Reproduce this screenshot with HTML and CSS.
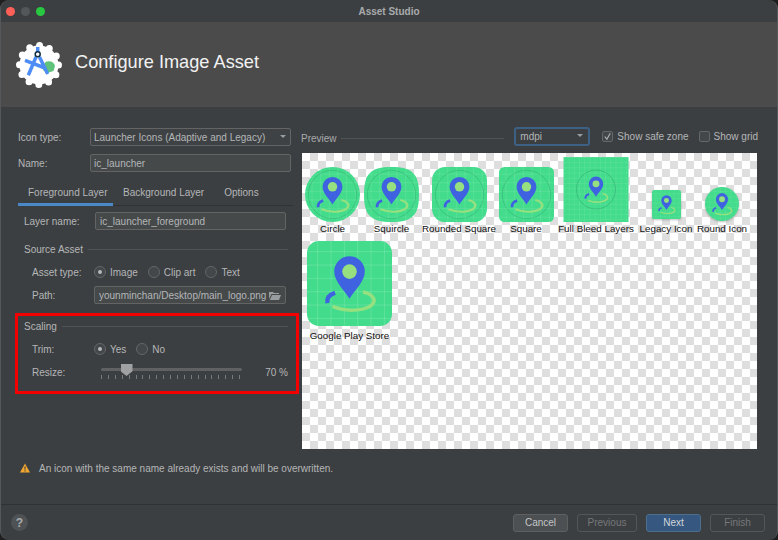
FILE: index.html
```html
<!DOCTYPE html>
<html lang="en">
<head>
  <meta charset="UTF-8">
  <meta name="viewport" content="width=device-width, initial-scale=1">
  <title>Asset Studio</title>
  <link rel="stylesheet" href="styles.css">
</head>
<body>

<svg class="defs" aria-hidden="true">
  <defs>
    <pattern id="grid" width="15.7" height="15.7" patternUnits="userSpaceOnUse" x="12" y="12">
      <path d="M0 0V15.7M0 0H15.7" stroke="#fff" stroke-opacity=".3" stroke-width="1.1" fill="none"/>
    </pattern>
    <pattern id="gridFine" width="8" height="8" patternUnits="userSpaceOnUse">
      <path d="M0 0V8M0 0H8" stroke="#fff" stroke-opacity=".22" stroke-width=".9" fill="none"/>
    </pattern>
    <symbol id="art" viewBox="0 0 100 100">
      <path d="M66 60C76 62 81 68 78 73C73 81 50 85 30 77" fill="none" stroke="#97e07f" stroke-width="4"/>
      <path d="M33 61C27 63 23 67 24 73" fill="none" stroke="#3f63e0" stroke-width="5"/>
      <path d="M50 68C44 58 32 48 32 36A18 18 0 0 1 68 36C68 48 56 58 50 68Z" fill="#3f63e0"/>
      <circle cx="50" cy="36" r="8.6" fill="#97e07f"/>
    </symbol>
  </defs>
</svg>

<div class="window">
  <div class="titlebar">
    <span class="light red"></span>
    <span class="light grey"></span>
    <span class="light green"></span>
    <span class="window-title">Asset Studio</span>
  </div>

  <div class="header">
    <svg class="logo" viewBox="0 0 46 46">
      <circle cx="23" cy="23" r="19.5" fill="#fff" stroke="#fff" stroke-width="7" stroke-linecap="round" stroke-dasharray="0 10.21"/>
      <path d="M27 28V24A6.2 6.500 0 0 1 39 24L37.500 29L31 31Z" fill="#5fc37c"/>
      <path d="M21.700 5V10M20 15L12.300 33.300M23.500 15L31.700 32M9 18.300L29 26" fill="none" stroke="#4e8df5" stroke-width="3.500"/>
      <circle cx="21.700" cy="12.300" r="2.500" fill="#fff" stroke="#12303f" stroke-width="1.500"/>
    </svg>
    <h1>Configure Image Asset</h1>
  </div>

  <div class="main">
    <div class="form">
      <div class="row">
        <label class="label-top">Icon type:</label>
        <div class="select wide">Launcher Icons (Adaptive and Legacy)<span class="arrow"></span></div>
      </div>
      <div class="row name-row">
        <label class="label-top">Name:</label>
        <div class="field wide">ic_launcher</div>
      </div>

      <div class="tabs">
        <span class="tab active">Foreground Layer</span>
        <span class="tab">Background Layer</span>
        <span class="tab">Options</span>
      </div>

      <div class="pane">
        <div class="row layer-row">
          <label class="label-layer">Layer name:</label>
          <div class="field grow">ic_launcher_foreground</div>
        </div>

        <div class="legend source"><span>Source Asset</span></div>
        <div class="row type-row">
          <label class="label-sub">Asset type:</label>
          <span class="radio on"></span><span class="opt">Image</span>
          <span class="radio"></span><span class="opt">Clip art</span>
          <span class="radio"></span><span class="opt">Text</span>
        </div>
        <div class="row path-row">
          <label class="label-sub">Path:</label>
          <div class="field grow path">
            younminchan/Desktop/main_logo.png
            <svg class="folder" viewBox="0 0 12 9"><path d="M0 1H4L5 2H10V3H2.500L0 8ZM3 4H12L10 9H.8Z" fill="#9a9d9f"/></svg>
          </div>
        </div>
      </div>

      <div class="scaling">
        <div class="legend"><span>Scaling</span></div>
        <div class="row trim-row">
          <label class="label-sub">Trim:</label>
          <span class="radio on"></span><span class="opt">Yes</span>
          <span class="radio"></span><span class="opt">No</span>
        </div>
        <div class="row resize-row">
          <label class="label-sub">Resize:</label>
          <div class="slider">
            <div class="track"></div>
            <div class="ticks"></div>
            <span class="thumb"></span>
          </div>
          <span class="percent">70 %</span>
        </div>
      </div>
    </div>

    <div class="preview">
      <div class="preview-head">
        <span class="preview-title">Preview</span>
        <span class="preview-line"></span>
        <div class="select density">mdpi<span class="arrow"></span></div>
        <span class="check on">
          <svg viewBox="0 0 10 10"><path d="M2 5L4.300 8L8 1.500" fill="none" stroke="#b5b5b5" stroke-width="1.200"/></svg>
        </span>
        <span class="check-text">Show safe zone</span>
        <span class="check"></span>
        <span class="check-text">Show grid</span>
      </div>

      <div class="canvas">
        <div class="icon-row">
          <div class="cell c-circle">
            <svg class="icon" viewBox="0 0 100 100">
              <circle cx="50" cy="50" r="50" fill="#43dc8c"/>
              <circle cx="50" cy="50" r="50" fill="url(#grid)"/>
              <circle class="safe" cx="50" cy="50" r="44"/>
              <use href="#art" width="100" height="100"/>
            </svg>
            <span>Circle</span>
          </div>
          <div class="cell c-squircle">
            <svg class="icon" viewBox="0 0 100 100">
              <path d="M50 0C88 0 100 12 100 50S88 100 50 100S0 88 0 50S12 0 50 0Z" fill="#43dc8c"/>
              <path d="M50 0C88 0 100 12 100 50S88 100 50 100S0 88 0 50S12 0 50 0Z" fill="url(#grid)"/>
              <circle class="safe" cx="50" cy="50" r="44"/>
              <use href="#art" width="100" height="100"/>
            </svg>
            <span>Squircle</span>
          </div>
          <div class="cell c-rounded">
            <svg class="icon" viewBox="0 0 100 100">
              <rect width="100" height="100" rx="24" fill="#43dc8c"/>
              <rect width="100" height="100" rx="24" fill="url(#grid)"/>
              <circle class="safe" cx="50" cy="50" r="44"/>
              <use href="#art" width="100" height="100"/>
            </svg>
            <span>Rounded Square</span>
          </div>
          <div class="cell c-square">
            <svg class="icon" viewBox="0 0 100 100">
              <rect width="100" height="100" rx="10" fill="#43dc8c"/>
              <rect width="100" height="100" rx="10" fill="url(#grid)"/>
              <circle class="safe" cx="50" cy="50" r="44"/>
              <use href="#art" width="100" height="100"/>
            </svg>
            <span>Square</span>
          </div>
          <div class="cell c-bleed">
            <svg class="icon" viewBox="0 0 100 100">
              <rect width="100" height="100" fill="#43dc8c"/>
              <rect width="100" height="100" fill="url(#gridFine)"/>
              <circle class="safe" cx="50" cy="50" r="30"/>
              <use href="#art" x="19" y="19" width="62" height="62"/>
            </svg>
            <span>Full Bleed Layers</span>
          </div>
          <div class="cell c-legacy">
            <svg class="icon" viewBox="0 0 100 100">
              <rect width="100" height="100" rx="8" fill="#43dc8c"/>
              <rect width="100" height="100" rx="8" fill="url(#grid)"/>
              <use href="#art" width="100" height="100"/>
            </svg>
            <span>Legacy Icon</span>
          </div>
          <div class="cell c-round">
            <svg class="icon" viewBox="0 0 100 100">
              <circle cx="50" cy="50" r="50" fill="#43dc8c"/>
              <circle cx="50" cy="50" r="50" fill="url(#grid)"/>
              <use href="#art" width="100" height="100"/>
            </svg>
            <span>Round Icon</span>
          </div>
        </div>
        <div class="icon-row second">
          <div class="cell c-play">
            <svg class="icon" viewBox="0 0 100 100">
              <rect width="100" height="100" rx="14" fill="#43dc8c"/>
              <rect width="100" height="100" rx="14" fill="url(#grid)"/>
              <use href="#art" width="100" height="100"/>
            </svg>
            <span>Google Play Store</span>
          </div>
        </div>
      </div>
    </div>
  </div>

  <div class="warning">
    <svg class="warn-icon" viewBox="0 0 10 10">
      <path d="M5 .5L10 9.500H0Z" fill="#f0a732"/>
      <path d="M5 3.500V6.500M5 7.300V8.500" stroke="#3c3f41" stroke-width="1.100"/>
    </svg>
    An icon with the same name already exists and will be overwritten.
  </div>

  <div class="footer">
    <span class="help">?</span>
    <span class="btn cancel">Cancel</span>
    <span class="btn disabled wider">Previous</span>
    <span class="btn primary">Next</span>
    <span class="btn disabled">Finish</span>
  </div>
</div>

</body>
</html>
```

FILE: styles.css
```css
html, body {
  margin: 0;
  padding: 0;
  background: #1f1f1f;
}
body {
  font-family: "Liberation Sans", Arial, sans-serif;
  font-size: 10px;
  color: #b4b6b8;
}
.defs {
  position: absolute;
  width: 0;
  height: 0;
}
.window {
  width: 778px;
  height: 540px;
  box-sizing: border-box;
  border-left: 1px solid #55585a;
  border-right: 1px solid #55585a;
  border-radius: 9px;
  background: #3c3f41;
  display: flex;
  flex-direction: column;
  overflow: hidden;
}

/* title bar */
.titlebar {
  height: 22px;
  flex: none;
  display: flex;
  align-items: center;
  gap: 6px;
  padding-left: 5px;
  position: relative;
}
.light {
  width: 9px;
  height: 9px;
  border-radius: 50%;
}
.red { background: #fe5f57; }
.grey { background: #54575a; }
.green { background: #28c840; }
.window-title {
  position: absolute;
  left: 0;
  right: 0;
  text-align: center;
  font-size: 10px;
  font-weight: bold;
  color: #a9abad;
}

/* header */
.header {
  height: 85px;
  flex: none;
  background: #4b4b4b;
  display: flex;
  align-items: center;
  padding-left: 15px;
}
.logo {
  width: 46px;
  height: 46px;
}
h1 {
  margin: 0 0 4px 13px;
  font-size: 18.200px;
  font-weight: normal;
  color: #f2f2f2;
}

/* layout */
.main {
  display: flex;
  padding: 21px 0 0 17px;
}
.form {
  width: 283px;
  flex: none;
}
.row {
  display: flex;
  align-items: center;
}
.name-row { margin-top: 8px; }
.label-top { width: 72px; }
.label-layer { width: 71px; }
.label-sub { width: 62px; padding-left: 8px; }

/* inputs */
.field, .select {
  height: 18px;
  box-sizing: border-box;
  background: #45494a;
  border: 1px solid #646464;
  border-radius: 2px;
  padding: 0 4px;
  display: flex;
  align-items: center;
  white-space: nowrap;
  position: relative;
}
.wide { width: 201px; padding: 0 3px; }
.grow { flex: 1; }
.select { background: #3f4244; }
.arrow {
  position: absolute;
  right: 4px;
  top: 6px;
  border-left: 3.500px solid transparent;
  border-right: 3.500px solid transparent;
  border-top: 3.500px solid #9a9d9f;
}
.path { justify-content: space-between; }
.folder { width: 12px; height: 9px; flex: none; }

/* tabs */
.tabs {
  display: flex;
  margin: 8px 8px 0 0;
  height: 26px;
  box-sizing: border-box;
  border-bottom: 1px solid #323232;
}
.tab {
  padding: 7px 10px 0;
  box-sizing: border-box;
  height: 25px;
  white-space: nowrap;
}
.tab.active {
  width: 95px;
  border-bottom: 3px solid #4a88c7;
  height: 26px;
}

/* foreground pane */
.pane { padding: 6px 13px 0 6px; }
.layer-row { margin-right: 2px; }
.legend {
  display: flex;
  align-items: center;
  gap: 5px;
  height: 14px;
}
.legend::after {
  content: "";
  flex: 1;
  height: 1px;
  background: #515355;
}
.source { margin-top: 12px; }
.type-row { margin-top: 9px; height: 14px; }
.path-row { margin: 7px 2px 0 0; }
.radio {
  width: 12px;
  height: 12px;
  box-sizing: border-box;
  border: 1px solid #646668;
  border-radius: 50%;
  background: #43474a;
  flex: none;
  margin-right: 4px;
  display: flex;
  align-items: center;
  justify-content: center;
}
.radio.on::after {
  content: "";
  width: 4px;
  height: 4px;
  border-radius: 50%;
  background: #b8b8b8;
}
.opt { margin-right: 10px; }

/* red annotated section */
.scaling {
  width: 284px;
  height: 81px;
  box-sizing: border-box;
  margin: 9px 0 0 -3px;
  border: 3px solid #f40000;
  padding: 3px 8px 0 6px;
}
.trim-row { margin-top: 9px; height: 14px; }
.resize-row { margin-top: 9px; height: 14px; }
.slider {
  width: 141px;
  height: 16px;
  margin-left: 7px;
  position: relative;
}
.track {
  height: 3px;
  margin-top: 4px;
  background: #5f6163;
  border-radius: 2px;
}
.ticks {
  height: 4px;
  margin-top: 4px;
  background: repeating-linear-gradient(90deg, #787a7c 0 1px, transparent 1px 6.900px);
}
.thumb {
  position: absolute;
  left: 19.500px;
  top: 0;
  width: 12px;
  height: 12px;
  background: #9fa1a3;
  clip-path: polygon(0 0, 100% 0, 100% 60%, 50% 100%, 0 60%);
}
.percent { margin-left: auto; }

/* preview */
.preview {
  width: 457px;
  flex: none;
  margin-top: -1px;
}
.preview-head {
  height: 19px;
  display: flex;
  align-items: center;
  padding-bottom: 7px;
}
.preview-title { color: #a8aaac; margin-top: 3px; }
.preview-line {
  flex: 1;
  height: 1px;
  background: #515355;
  margin: 3px 10px 0 4px;
}
.density {
  width: 76px;
  height: 19px;
  border: 2px solid #3d6185;
  border-radius: 3px;
  margin-right: 12px;
  background: #3c3f41;
}
.density .arrow { top: 5px; right: 5px; }
.check {
  width: 11px;
  height: 11px;
  box-sizing: border-box;
  border: 1px solid #646668;
  border-radius: 2px;
  background: #43474a;
  margin-right: 4px;
  display: flex;
}
.check svg { width: 100%; height: 100%; }
.check-text { margin-right: 10px; white-space: nowrap; }
.check-text:last-child { margin-right: 0; }
.canvas {
  width: 455px;
  height: 296px;
  margin-left: 1px;
  box-sizing: border-box;
  padding: 4px 0 0 2px;
  background: conic-gradient(#dedede 25%, #fff 0 50%, #dedede 0 75%, #fff 0) 0 0 / 16px 16px;
}
.icon-row {
  display: flex;
  align-items: flex-end;
}
.second { margin-top: 5px; }
.cell {
  display: flex;
  flex-direction: column;
  align-items: center;
  color: #111;
  font-size: 9.800px;
  line-height: 14px;
  white-space: nowrap;
}
.icon { display: block; }
.safe {
  fill: none;
  stroke: #1f7a55;
  stroke-opacity: .55;
  stroke-width: .8;
}
.c-circle { width: 57px; }
.c-squircle { width: 61px; }
.c-rounded { width: 74px; }
.c-square { width: 60px; }
.c-bleed { width: 80px; }
.c-legacy { width: 60px; }
.c-round { width: 52px; }
.c-circle .icon, .c-squircle .icon, .c-rounded .icon, .c-square .icon { width: 55px; height: 55px; }
.c-bleed .icon { width: 66px; height: 65px; }
.c-legacy .icon { width: 29px; height: 29px; margin-bottom: 3px; filter: drop-shadow(0 1px 1px rgba(0,0,0,.25)); }
.c-round .icon { width: 34px; height: 34px; margin-bottom: 1px; filter: drop-shadow(0 1px 1px rgba(0,0,0,.25)); }
.c-play { width: 91px; }
.c-play .icon { width: 85px; height: 85px; margin-bottom: 3px; }

/* warning */
.warning {
  display: flex;
  align-items: center;
  gap: 9px;
  height: 16px;
  margin: 11px 0 0 19px;
}
.warn-icon { width: 10px; height: 10px; }

/* footer */
.footer {
  margin-top: auto;
  height: 36px;
  box-sizing: border-box;
  border-top: 1px solid #2f3133;
  display: flex;
  align-items: center;
  gap: 9px;
  padding: 0 12px 0 10px;
}
.help {
  width: 17px;
  height: 17px;
  border-radius: 50%;
  background: #4e5254;
  color: #a9abad;
  font-size: 12px;
  font-weight: bold;
  display: flex;
  align-items: center;
  justify-content: center;
  margin-right: auto;
}
.btn {
  height: 18px;
  box-sizing: border-box;
  border: 1px solid #5e6060;
  border-radius: 3px;
  display: flex;
  align-items: center;
  justify-content: center;
  width: 55px;
}
.cancel { background: #4c5052; color: #c4c6c8; }
.disabled { color: #75777a; border-color: #54575a; }
.wider { width: 60px; }
.primary { background: #365880; border-color: #4c708c; color: #d0d6dc; }
```
